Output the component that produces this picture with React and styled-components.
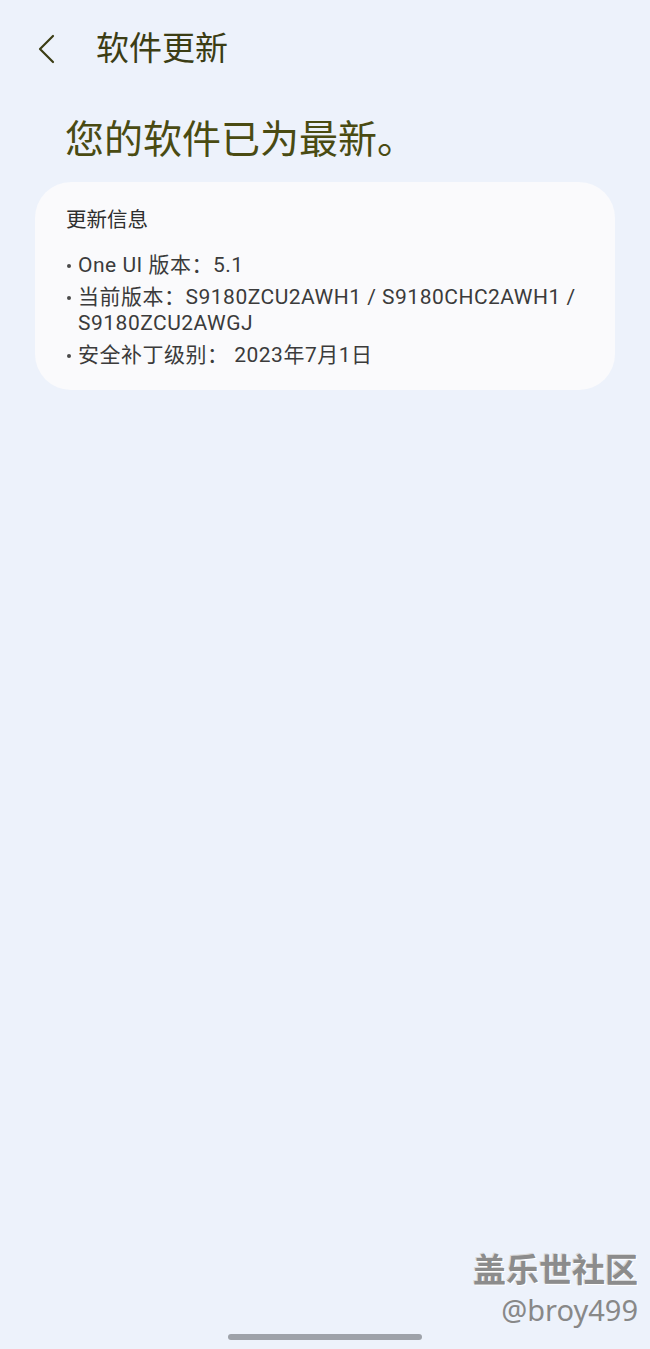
import React from 'react';
import styled, {createGlobalStyle} from 'styled-components';

const GlobalStyle = createGlobalStyle`
  html, body {
    margin: 0;
    padding: 0;
    background: #edf2fb;
  }
  body {
    font-family: Roboto, "Noto Sans CJK SC", sans-serif;
  }
`;

const info = [
  'One UI 版本：5.1',
  '当前版本：S9180ZCU2AWH1 / S9180CHC2AWH1 / S9180ZCU2AWGJ',
  '安全补丁级别： 2023年7月1日',
];

export default function App() {
  return (
    <>
      <GlobalStyle />
      <Page>
        <Header>
          <BackButton type="button" aria-label="返回">
            <svg width="18" height="30" viewBox="0 0 18 30" fill="none">
              <path
                d="M16 2 L3 15 L16 28"
                stroke="#3c3d14"
                strokeWidth="2.2"
                strokeLinecap="round"
                strokeLinejoin="round"
              />
            </svg>
          </BackButton>
          <Title>软件更新</Title>
        </Header>

        <Headline>您的软件已为最新。</Headline>

        <Card>
          <CardTitle>更新信息</CardTitle>
          <InfoList>
            {info.map((line) => (
              <InfoItem key={line}>{line}</InfoItem>
            ))}
          </InfoList>
        </Card>

        <HomeBar />

        <Watermark>
          <WatermarkBrand>盖乐世社区</WatermarkBrand>
          <WatermarkUser>@broy499</WatermarkUser>
        </Watermark>
      </Page>
    </>
  );
}

const Page = styled.div`
  position: relative;
  display: flex;
  flex-direction: column;
  min-height: 100vh;
  box-sizing: border-box;
  background: #edf2fb;
`;

const Header = styled.header`
  display: flex;
  align-items: center;
  height: 44px;
  padding: 27px 0 0 37px;
`;

const BackButton = styled.button`
  display: flex;
  align-items: center;
  border: 0;
  padding: 0;
  margin: 0 40px 0 0;
  background: transparent;
  width: 19px;
`;

const Title = styled.h1`
  margin: 0;
  font-size: 33px;
  line-height: 44px;
  font-weight: 400;
  color: #3c3d14;
`;

const Headline = styled.h2`
  margin: 43px 0 0 65px;
  font-size: 39px;
  line-height: 52px;
  font-weight: 400;
  color: #4a4b12;
`;

const Card = styled.section`
  margin: 16px 35px 0;
  padding: 25px 31px 22px;
  border-radius: 36px;
  background: #fafafc;
`;

const CardTitle = styled.h3`
  margin: 0;
  font-size: 20.5px;
  line-height: 26px;
  font-weight: 400;
  color: #2e2e2e;
`;

const InfoList = styled.ul`
  list-style: none;
  margin: 19px 0 0;
  padding: 0;
  display: flex;
  flex-direction: column;
  gap: 6px;
`;

const InfoItem = styled.li`
  position: relative;
  padding-left: 12px;
  font-size: 21px;
  line-height: 26px;
  letter-spacing: 0.5px;
  color: #3b3b3b;
  &::before {
    content: '';
    position: absolute;
    left: 1px;
    top: 12px;
    width: 4px;
    height: 4px;
    border-radius: 50%;
    background: #4a4a4a;
  }
`;

const HomeBar = styled.div`
  margin: auto auto 9px;
  width: 194px;
  height: 6px;
  border-radius: 3px;
  background: #9ea2a9;
`;

const Watermark = styled.div`
  position: absolute;
  right: 12px;
  bottom: 22px;
  display: flex;
  flex-direction: column;
  align-items: flex-end;
  gap: 8px;
`;

const WatermarkBrand = styled.span`
  font-family: "Noto Sans CJK SC", sans-serif;
  font-size: 33px;
  line-height: 34px;
  font-weight: 700;
  color: #8c8c8c;
  text-shadow: 1px 1px 0 #ffffff, -1px -1px 0 #d8d8d8;
`;

const WatermarkUser = styled.span`
  font-family: "Noto Sans", "Liberation Sans", sans-serif;
  font-size: 29px;
  line-height: 34px;
  color: #888888;
`;
